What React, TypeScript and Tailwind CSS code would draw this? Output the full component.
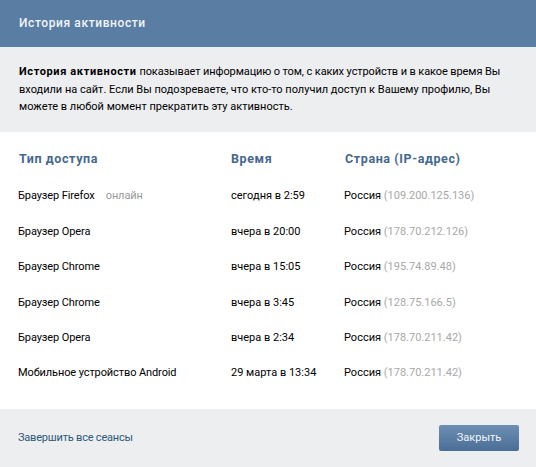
const sessions = [
  { type: 'Браузер Firefox', online: true, time: 'сегодня в 2:59', ip: '(109.200.125.136)' },
  { type: 'Браузер Opera', time: 'вчера в 20:00', ip: '(178.70.212.126)' },
  { type: 'Браузер Chrome', time: 'вчера в 15:05', ip: '(195.74.89.48)' },
  { type: 'Браузер Chrome', time: 'вчера в 3:45', ip: '(128.75.166.5)' },
  { type: 'Браузер Opera', time: 'вчера в 2:34', ip: '(178.70.211.42)' },
  { type: 'Мобильное устройство Android', time: '29 марта в 13:34', ip: '(178.70.211.42)' },
]

export default function App() {
  return (
    <div className="w-[536px] h-[467px] flex flex-col bg-white text-[11px] text-black font-['Roboto',sans-serif]">
      {/* Header */}
      <div className="h-[47px] shrink-0 flex items-center px-[19px] pb-px bg-[#597da3] text-[12px] font-medium tracking-[0.6px] text-[#f2f5f8]">
        История активности
      </div>

      {/* Intro */}
      <div className="h-[85px] shrink-0 pt-[16px] pl-[19px] pr-[15px] bg-[#edeef0] leading-[17.5px]">
        <b className="font-bold tracking-[0.62px]">История активности</b>{' '}
        <span className="tracking-[-0.1px]">показывает информацию о том, с каких устройств и в какое время Вы</span> входили на сайт. Если Вы подозреваете, что кто-то получил доступ к Вашему профилю, Вы можете в любой момент прекратить эту активность.
      </div>

      {/* Sessions */}
      <div className="flex-1 pt-[18px] pl-[18px]">
        <div className="grid grid-cols-[213px_114px_1fr] h-[18px] items-center text-[12.5px] font-bold tracking-[0.6px] text-[#45688e]">
          <div className="pl-px">Тип доступа</div>
          <div>Время</div>
          <div>Страна (IP-адрес)</div>
        </div>
        <div className="mt-[11px]">
          {sessions.map((s, i) => (
            <div key={i} className="grid grid-cols-[213px_114px_1fr] h-[35.4px] items-center">
              <div className="tracking-[-0.1px]">
                {s.type}
                {s.online && <span className="ml-[11px] text-[#999999]">онлайн</span>}
              </div>
              <div>{s.time}</div>
              <div className="-ml-px">
                Россия <span className="text-[#a8a8a8]">{s.ip}</span>
              </div>
            </div>
          ))}
        </div>
      </div>

      {/* Footer */}
      <div className="h-[58px] shrink-0 flex items-center justify-between pl-[18px] pr-[17px] bg-[#edeef0]">
        <a className="tracking-[-0.2px] text-[#2b587a]">Завершить все сеансы</a>
        <button className="w-[80px] h-[26px] rounded-[2px] bg-gradient-to-b from-[#6d8fb3] to-[#4a6e96] text-[#f2f5f8] text-[11px]">
          Закрыть
        </button>
      </div>
    </div>
  )
}
